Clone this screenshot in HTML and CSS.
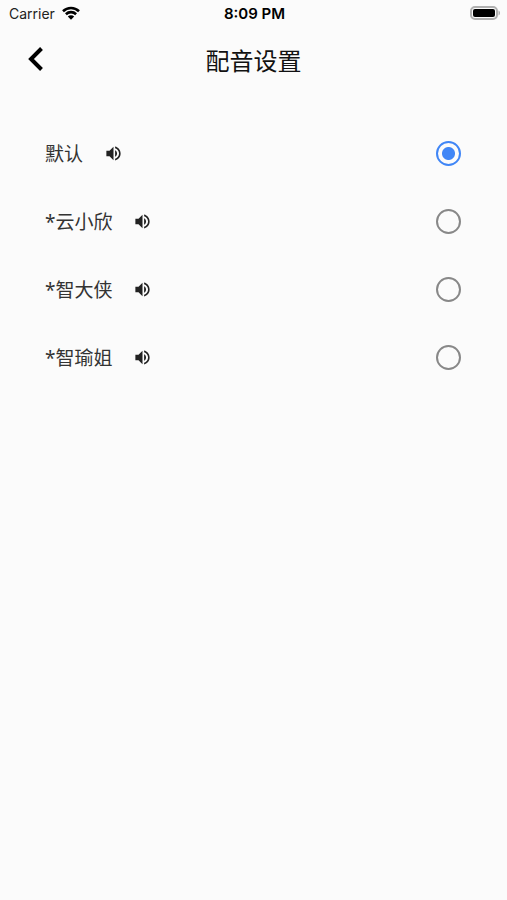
FILE: index.html
```html
<!DOCTYPE html>
<html lang="zh-CN">
  <head>
    <meta charset="UTF-8" />
    <meta name="viewport" content="width=device-width, initial-scale=1.0" />
    <title>配音设置</title>
    <link rel="stylesheet" href="styles.css">
  </head>
  <body>
    <svg class="sprite" width="0" height="0" aria-hidden="true">
      <symbol id="speaker" viewBox="0 0 24 24">
        <path d="M3 8.5v7h4l5 5V3.5L7 8.5H3zm13.5 3.5c0-1.77-1.02-3.29-2.5-4.03v8.05c1.48-.73 2.5-2.25 2.5-4.02zM14 3.23v2.06c2.89.86 5 3.54 5 6.71s-2.11 5.85-5 6.71v2.06c4.01-.91 7-4.49 7-8.77s-2.99-7.86-7-8.77z" />
      </symbol>
    </svg>

    <div class="statusbar">
      <div class="carrier">
        <span>Carrier</span>
        <svg class="wifi" viewBox="0 0 18 14" aria-hidden="true">
          <path d="M1 5.2a11.6 11.6 0 0 1 16 0M3.9 8.2a7.4 7.4 0 0 1 10.2 0" />
          <path class="dot" d="M9 13.8l3.2-3.3a4.6 4.6 0 0 0-6.4 0z" />
        </svg>
      </div>
      <span class="time">8:09 PM</span>
      <svg class="battery" viewBox="0 0 30 14" aria-hidden="true">
        <rect class="shell" x="1" y="1" width="26" height="12" rx="4" />
        <rect x="3" y="3" width="22" height="8" rx="2" />
        <path class="tip" d="M28.5 4.5c2 .8 2 4.2 0 5z" />
      </svg>
    </div>

    <header class="topbar">
      <button class="back" type="button" aria-label="返回">
        <svg viewBox="0 0 16 24" aria-hidden="true">
          <path d="M13.5 1.5L3 12l10.5 10.5" />
        </svg>
      </button>
      <h1>配音设置</h1>
    </header>

    <main>
      <ul class="voices">
        <li>
          <label for="voice1">默认</label>
          <button class="play" type="button" aria-label="试听 默认"><svg><use href="#speaker" /></svg></button>
          <input type="radio" name="voice" id="voice1" checked />
        </li>
        <li>
          <label for="voice2">*云小欣</label>
          <button class="play" type="button" aria-label="试听 云小欣"><svg><use href="#speaker" /></svg></button>
          <input type="radio" name="voice" id="voice2" />
        </li>
        <li>
          <label for="voice3">*智大侠</label>
          <button class="play" type="button" aria-label="试听 智大侠"><svg><use href="#speaker" /></svg></button>
          <input type="radio" name="voice" id="voice3" />
        </li>
        <li>
          <label for="voice4">*智瑜姐</label>
          <button class="play" type="button" aria-label="试听 智瑜姐"><svg><use href="#speaker" /></svg></button>
          <input type="radio" name="voice" id="voice4" />
        </li>
      </ul>
    </main>
  </body>
</html>
```

FILE: styles.css
```css
* {
  box-sizing: border-box;
}

body {
  margin: 0;
  background-color: #fbfbfb;
  color: #222;
  font-family: "Noto Sans CJK SC", sans-serif;
}

button {
  padding: 0;
  border: none;
  background: transparent;
  color: inherit;
  cursor: pointer;
}

svg {
  display: block;
}

.sprite {
  position: absolute;
}

/* status bar */

.statusbar {
  display: grid;
  grid-template-columns: 1fr auto 1fr;
  align-items: center;
  height: 26px;
  padding: 0 7px 0 9px;
  font-family: Inter, sans-serif;
  font-size: 14px;
}

.carrier {
  display: flex;
  align-items: center;
  gap: 7px;
}

.wifi {
  width: 18px;
  height: 14px;
  fill: none;
  stroke: #000;
  stroke-width: 2.6;
}

.wifi .dot {
  fill: #000;
  stroke: none;
}

.time {
  color: #000;
  font-size: 15px;
  font-weight: 600;
}

.battery {
  justify-self: end;
  width: 30px;
  height: 14px;
}

.battery .shell {
  fill: #fbfbfb;
  stroke: #b0b0b0;
  stroke-width: 2;
}

.battery .tip {
  fill: #b0b0b0;
}

/* title */

.topbar {
  display: grid;
  grid-template-columns: 1fr auto 1fr;
  align-items: center;
  height: 66px;
  padding: 0 24px;
}

.back {
  justify-self: start;
  padding: 4px;
}

.back svg {
  width: 16px;
  height: 24px;
  fill: none;
  stroke: #000;
  stroke-width: 4;
}

h1 {
  margin: 0;
  color: #111;
  font-size: 24px;
  font-weight: 400;
}

/* voice list */

.voices {
  margin: 0;
  padding: 27px 46px 0 45px;
  list-style: none;
}

.voices li {
  display: flex;
  align-items: center;
  height: 68px;
}

.voices label {
  color: #333;
  font-family: "Noto Sans", "Noto Sans CJK SC", sans-serif;
  font-size: 19px;
  font-weight: 400;
}

.play {
  margin-left: 21px;
}

.play svg {
  width: 19px;
  height: 19px;
  fill: #222;
}

input[type="radio"] {
  appearance: none;
  width: 25px;
  height: 25px;
  margin: 0 0 0 auto;
  border: 2px solid #888;
  border-radius: 50%;
  cursor: pointer;
}

input[type="radio"]:checked {
  border-color: #4086f6;
  background: radial-gradient(circle, #4086f6 6px, transparent 7px);
}
```
